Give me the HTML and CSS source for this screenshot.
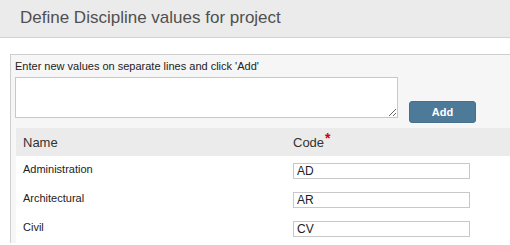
FILE: index.html
```html
<!DOCTYPE html>
<html lang="en">

<head>
    <meta charset="UTF-8">
    <title>Define Discipline values</title>
    <link rel="stylesheet" href="styles.css">
</head>

<body>

    <div class="page-header">
        <h1>Define Discipline values for project</h1>
    </div>

    <div class="panel">
        <p class="hint">Enter new values on separate lines and click 'Add'</p>
        <div class="add-row">
            <textarea id="newValues"></textarea>
            <button type="button" class="add-btn">Add</button>
        </div>

        <table class="values">
            <thead>
                <tr>
                    <th class="col-name">Name</th>
                    <th class="col-code">Code<span class="required">*</span></th>
                </tr>
            </thead>
            <tbody>
                <tr>
                    <td class="name">Administration</td>
                    <td class="code"><input type="text" value="AD"></td>
                </tr>
                <tr>
                    <td class="name">Architectural</td>
                    <td class="code"><input type="text" value="AR"></td>
                </tr>
                <tr>
                    <td class="name">Civil</td>
                    <td class="code"><input type="text" value="CV"></td>
                </tr>
            </tbody>
        </table>
    </div>

</body>

</html>
```

FILE: styles.css
```css
body {
    margin: 0;
    font-family: "Liberation Sans", Arial, sans-serif;
    background: #fff;
    color: #222;
}

.page-header {
    height: 37px;
    background: #ebebeb;
    border-bottom: 1px solid #d2d2d2;
}

.page-header h1 {
    margin: 0;
    padding-left: 20px;
    font-size: 17px;
    font-weight: normal;
    line-height: 36px;
    color: #505050;
}

.panel {
    margin: 16px 0 0 10px;
    padding: 4px 0 0 4px;
    background: #f6f6f6;
    border: 1px solid #cfcfcf;
    border-right: none;
    border-bottom: none;
}

.hint {
    margin: 0;
    font-size: 11px;
    line-height: 14px;
    color: #222;
}

.add-row {
    display: flex;
    align-items: flex-start;
    margin-top: 4px;
    height: 46px;
}

.add-row textarea {
    box-sizing: border-box;
    width: 383px;
    height: 41px;
    margin: 0;
    border: 1px solid #c8c8c8;
    background: #fff;
}

.add-btn {
    box-sizing: border-box;
    width: 67px;
    height: 22px;
    margin: 24px 0 0 11px;
    background: #4e7a9a;
    color: #fff;
    border: 1px solid #46708e;
    border-radius: 3px;
    font-family: "Liberation Sans", Arial, sans-serif;
    font-size: 11px;
    font-weight: bold;
    padding: 0;
}

.values {
    margin: 5px 0 0 1px;
    width: calc(100% - 1px);
    border-collapse: collapse;
    background: #fff;
}

.values th {
    height: 28px;
    padding: 0 0 0 7px;
    background: #ebebeb;
    font-size: 13px;
    font-weight: normal;
    text-align: left;
    color: #333;
}

.values .col-name {
    width: 263px;
}

.required {
    color: #d40000;
    font-weight: bold;
    font-size: 14px;
    position: relative;
    top: -4px;
    margin-left: 1px;
}

.values td {
    height: 26px;
    padding: 0 0 0 7px;
    font-size: 11px;
    color: #222;
}

.values td.name {
    padding-bottom: 3px;
}

.values td.code {
    padding-top: 2px;
    padding-bottom: 1px;
}

.values input {
    box-sizing: border-box;
    width: 177px;
    height: 16px;
    margin: 0;
    padding: 0 3px;
    border: 1px solid #c8c8c8;
    font-family: "Liberation Sans", Arial, sans-serif;
    font-size: 12px;
    color: #222;
    display: block;
}
```
